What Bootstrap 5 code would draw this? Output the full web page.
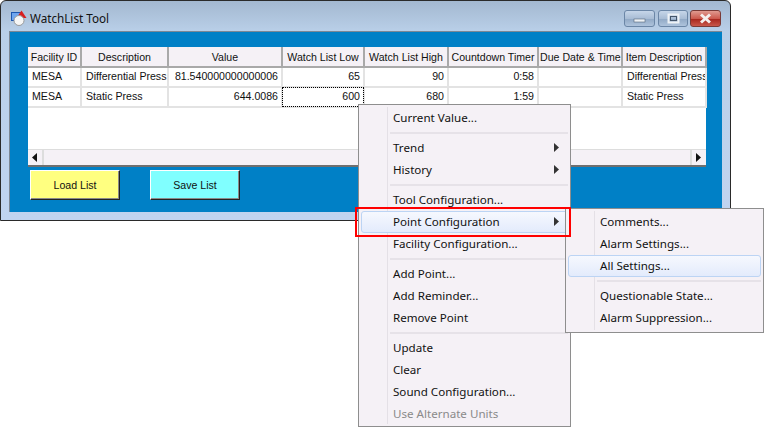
<!DOCTYPE html>
<html lang="en">
<head>
  <meta charset="UTF-8">
  <title>WatchList Tool</title>
  <link href="https://cdn.jsdelivr.net/npm/bootstrap@5.3.3/dist/css/bootstrap.min.css" rel="stylesheet" />
  <style>
    body { background: #fff; margin: 0; width: 764px; height: 428px; overflow: hidden; position: relative; }
    .wl-window { width: 731px; height: 221px; border: 1px solid #2a2a2a; border-radius: 6px 6px 0 0;
      background: linear-gradient(#a3b8d0, #b9cfe8 30px, #c0d4f0); padding: 0 8px 8px 8px; }
    .wl-title { height: 30px; padding-top: 4px; font: 11.7px "Noto Sans", sans-serif; color: #111; }
    .wl-title span { margin-left: 3px; }
    .cap-btn { height: 17px; border: 1px solid #6b86a6; border-radius: 3px; background: linear-gradient(#c6d6e9, #a9bdd5 50%, #92aac6 55%, #aec3dc); }
    .cap-min { width: 31px; margin-right: 3px; }
    .cap-max { width: 30px; margin-right: 2px; }
    .cap-close { width: 31px; border-color: #7a3a36; background: linear-gradient(#e09a90, #cc5a4e 50%, #a8281f 55%, #c9574a); }
    .wl-client { height: 181px; background: #0080c6; border: 1px solid #7c8794; border-right: 0; border-bottom: 0; padding: 15px 15px 0 18px; }
    .wl-grid { height: 120px; width: 678px; background: #fff; border-bottom: 2px solid #6f6f6f; }
    .wl-table { table-layout: fixed; width: 678px; font: 10.6px "Liberation Sans", sans-serif; color: #111; margin: 0; }
    .wl-table th, .wl-table td { padding: 0 3px 1px 4px; height: 20px; line-height: 17px; border: 0; border-right: 2px solid #e3e3e3; border-bottom: 2px solid #e3e3e3; white-space: nowrap; overflow: hidden; font-weight: 400; background: #fff; box-shadow: none; }
    .wl-table th { background: #f5f1f6; text-align: center; border-right-color: #a9a9a9; border-bottom-color: #a9a9a9; padding: 0 1px; line-height: 18px; }
    .wl-table td.num { text-align: right; }
    .wl-table td.focus-cell { outline: 1px dotted #000; outline-offset: -1px; }
    .wl-scroll { height: 16px; background: #f5f1f6; border-top: 1px solid #ddd; }
    .wl-arrow { width: 16px; border-right: 2px solid #ddd; }
    .wl-arrow.end { border-right: 0; border-left: 2px solid #ddd; }
    .wl-load, .wl-save { width: 90px; height: 30px; border: 1px solid; border-color: #fff #222 #222 #fff; border-radius: 0; padding: 0; color: #111; font: 10.6px "Liberation Sans", sans-serif; box-shadow: inset -1px -1px 0 #8a8a8a; }
    .wl-load { background: #ffff80; }
    .wl-save { background: #80ffff; }
    .wl-load:hover { background: #ffff80; color: #111; }
    .wl-save:hover { background: #80ffff; color: #111; }
    .wl-menu { position: absolute; background: #f5f1f6; border: 1px solid #8e8e8e; padding: 2px; font: 11.6px "Noto Sans", sans-serif; color: #111; margin: 0; list-style: none; }
    .wl-menu::before { content: ""; position: absolute; top: 2px; bottom: 2px; width: 1px; background: #e4e0e6; }
    .wl-main { left: 358px; top: 104px; width: 213px; height: 323px; }
    .wl-main::before { left: 28px; }
    .wl-sub { left: 565px; top: 208px; width: 199px; height: 125px; }
    .wl-sub::before { left: 28px; }
    .wl-menu li { height: 22px; padding-left: 31px; position: relative; border: 1px solid transparent; border-radius: 3px; line-height: 20px; }
    .wl-menu li.wl-sep { height: 8px; border: 0; margin-left: 29px; padding: 0; position: relative; }
    .wl-menu li.wl-sep::after { content: ""; position: absolute; left: 0; right: 0; top: 3px; height: 2px; background: #e6e2e8; }
    .wl-menu li.wl-off { color: #8a8a8a; }
    .wl-menu li.wl-on { background: linear-gradient(#f6f8fe, #e3ebfc); border-color: #bcd4f4; }
    .wl-menu li svg { position: absolute; right: 8px; top: 5px; }
    .wl-redbox { position: absolute; left: 355px; top: 207px; width: 216px; height: 30px; border: 2px solid #f00; pointer-events: none; }
  </style>
</head>
<body>
  <div class="wl-window">
    <div class="wl-title d-flex align-items-center">
      <svg width="16" height="16" viewBox="0 0 16 16" class="flex-shrink-0" style="margin-left:2px">
        <rect x="0.5" y="2.5" width="10" height="8" fill="#6fa6ee" stroke="#1c57b0"/>
        <path d="M5.5 8 L10.5 0.5 L15.5 8 Z" fill="#d81f1f"/>
        <circle cx="8" cy="10.5" r="5" fill="#f6f6f6" stroke="#9a9a9a"/>
      </svg>
      <span>WatchList Tool</span>
      <div class="ms-auto d-flex" style="margin-right:1px">
        <div class="cap-btn cap-min d-flex align-items-center justify-content-center"><svg width="13" height="9"><rect x="1" y="5" width="11" height="3" fill="#eef2f6" stroke="#55657a" stroke-width=".6"/></svg></div>
        <div class="cap-btn cap-max d-flex align-items-center justify-content-center"><svg width="13" height="11"><rect x="1.5" y="1.5" width="10" height="8" fill="none" stroke="#eef2f6" stroke-width="2"/><rect x="3.5" y="3.5" width="6" height="4" fill="none" stroke="#44556a"/></svg></div>
        <div class="cap-btn cap-close d-flex align-items-center justify-content-center"><svg width="15" height="11"><path d="M3 1.5 L12 9.5 M12 1.5 L3 9.5" stroke="#f4efee" stroke-width="3"/></svg></div>
      </div>
    </div>
    <div class="wl-client">
      <div class="wl-grid d-flex flex-column">
        <table class="table wl-table">
          <colgroup>
            <col style="width:53px"><col style="width:87px"><col style="width:114px"><col style="width:82px">
            <col style="width:84px"><col style="width:90px"><col style="width:84px"><col style="width:84px">
          </colgroup>
          <thead>
            <tr><th>Facility ID</th><th>Description</th><th>Value</th><th>Watch List Low</th><th>Watch List High</th><th>Countdown Timer</th><th>Due Date &amp; Time</th><th>Item Description</th></tr>
          </thead>
          <tbody>
            <tr><td>MESA</td><td>Differential Press</td><td class="num">81.540000000000006</td><td class="num">65</td><td class="num">90</td><td class="num">0:58</td><td></td><td>Differential Press</td></tr>
            <tr><td>MESA</td><td>Static Press</td><td class="num">644.0086</td><td class="num focus-cell">600</td><td class="num">680</td><td class="num">1:59</td><td></td><td>Static Press</td></tr>
          </tbody>
        </table>
        <div class="wl-scroll d-flex justify-content-between mt-auto">
          <div class="wl-arrow d-flex align-items-center justify-content-center"><svg width="6" height="9"><path d="M5 0 L0 4.5 L5 9 Z" fill="#111"/></svg></div>
          <div class="wl-arrow end d-flex align-items-center justify-content-center"><svg width="6" height="9"><path d="M0 0 L5 4.5 L0 9 Z" fill="#111"/></svg></div>
        </div>
      </div>
      <div class="d-flex" style="gap:30px;margin:3px 0 0 2px">
        <button class="btn wl-load" type="button">Load List</button>
        <button class="btn wl-save" type="button">Save List</button>
      </div>
    </div>
  </div>

  <ul class="wl-menu wl-main">
    <li>Current Value...</li>
    <li class="wl-sep"></li>
    <li>Trend<svg width="5" height="9"><path d="M0 0 L5 4.5 L0 9 Z" fill="#333"/></svg></li>
    <li>History<svg width="5" height="9"><path d="M0 0 L5 4.5 L0 9 Z" fill="#333"/></svg></li>
    <li class="wl-sep"></li>
    <li>Tool Configuration...</li>
    <li class="wl-on">Point Configuration<svg width="5" height="9"><path d="M0 0 L5 4.5 L0 9 Z" fill="#333"/></svg></li>
    <li>Facility Configuration...</li>
    <li class="wl-sep"></li>
    <li>Add Point...</li>
    <li>Add Reminder...</li>
    <li>Remove Point</li>
    <li class="wl-sep"></li>
    <li>Update</li>
    <li>Clear</li>
    <li>Sound Configuration...</li>
    <li class="wl-off">Use Alternate Units</li>
  </ul>
  <ul class="wl-menu wl-sub">
    <li>Comments...</li>
    <li>Alarm Settings...</li>
    <li class="wl-on">All Settings...</li>
    <li class="wl-sep"></li>
    <li>Questionable State...</li>
    <li>Alarm Suppression...</li>
  </ul>
  <div class="wl-redbox"></div>

  <script src="https://cdn.jsdelivr.net/npm/bootstrap@5.3.3/dist/js/bootstrap.bundle.min.js"></script>
</body>
</html>
